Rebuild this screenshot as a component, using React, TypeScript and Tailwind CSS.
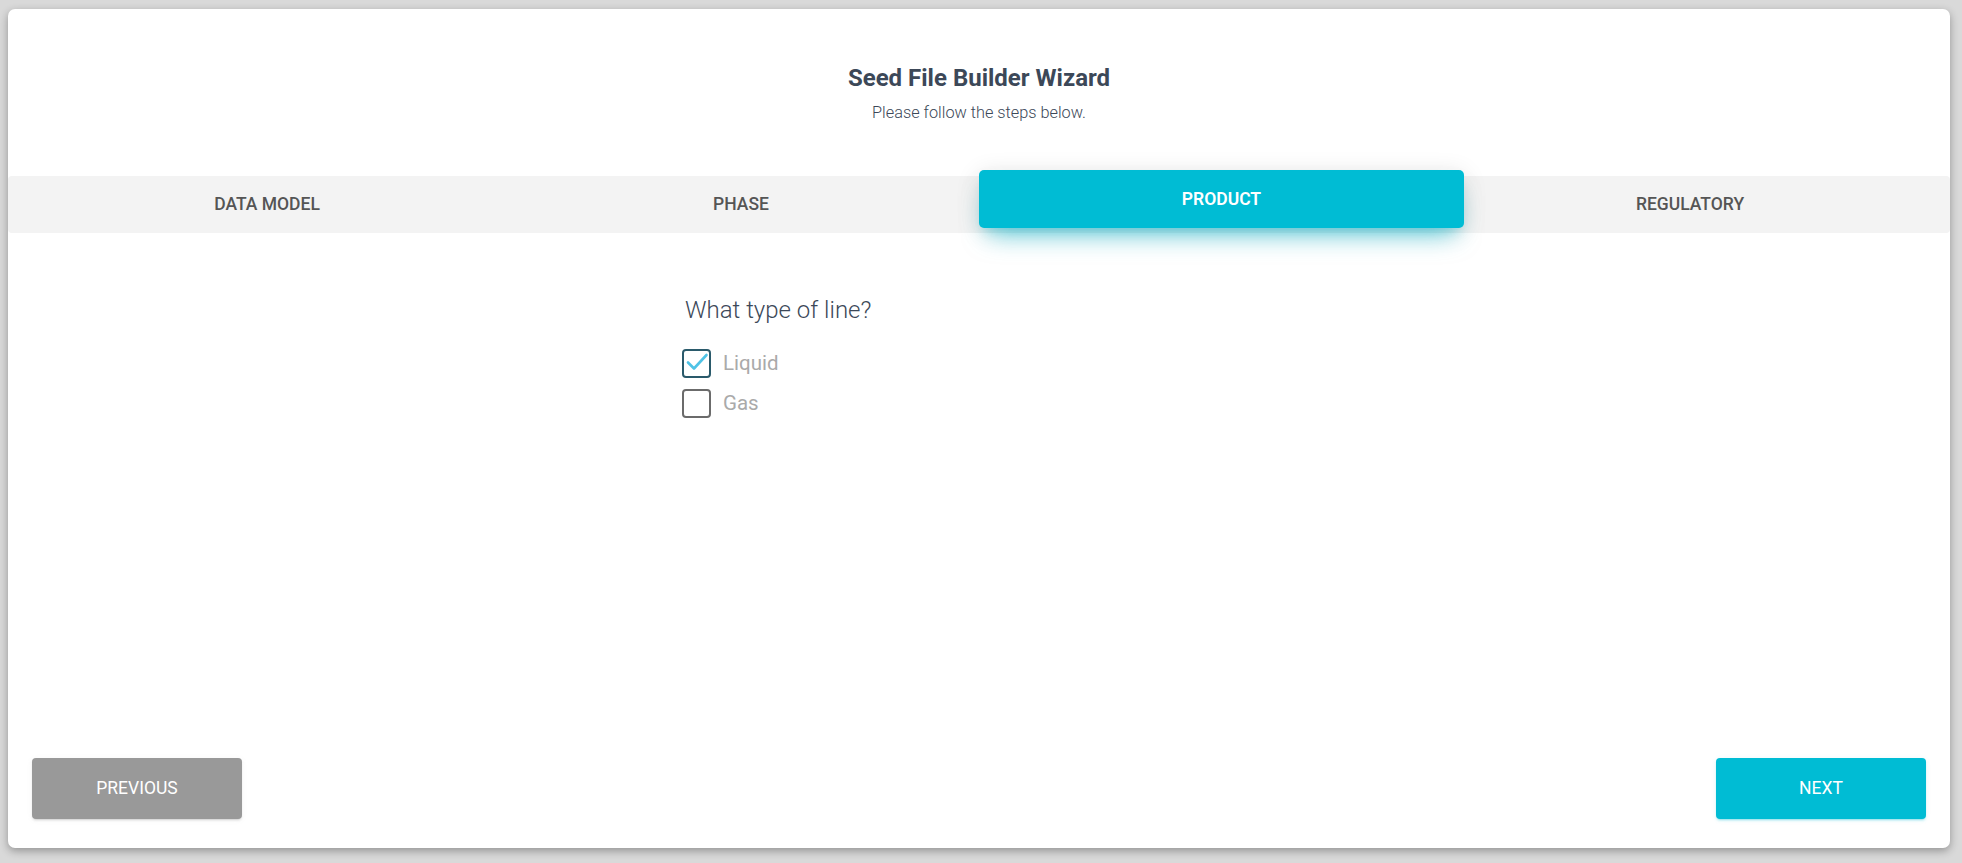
import { useState } from "react";

const STEPS = ["Data Model", "Phase", "Product", "Regulatory"];

export default function App() {
  const [checked, setChecked] = useState<Record<string, boolean>>({ Liquid: true, Gas: false });
  const active = 2;

  return (
    <div className="min-h-screen w-full bg-[#d9d9d9] pt-[9px] pl-[8px]" style={{ fontFamily: "Roboto, 'Liberation Sans', sans-serif" }}>
      {/* Card */}
      <div className="w-[1942px] h-[839px] bg-white rounded-[7px] shadow-[0_3px_9px_rgba(0,0,0,0.32)] flex flex-col">
        {/* Header */}
        <div className="pt-[53px] flex flex-col items-center text-[#3c4858]">
          <h3 className="text-[24px] leading-[32px] font-bold">Seed File Builder Wizard</h3>
          <h5 className="mt-[8px] text-[16.3px] leading-[22px] font-light">Please follow the steps below.</h5>
        </div>

        {/* Steps */}
        <div className="relative mt-[52px]">
          <ul className="grid grid-cols-[518fr_430fr_474fr_520fr] h-[57px] bg-[#f3f3f3] rounded-[4px]">
            {STEPS.map((s, i) => (
              <li
                key={s}
                className={`flex items-center justify-center text-[17.5px] font-medium uppercase text-[#555555] ${i === active ? "invisible" : ""}`}
              >
                {s}
              </li>
            ))}
          </ul>
          {/* Moving tab */}
          <div className="absolute top-[-6px] left-[971px] w-[485px] h-[58px] rounded-[5px] bg-[#00bcd4] flex items-center justify-center text-white text-[17.5px] font-semibold uppercase shadow-[0_16px_26px_-10px_rgba(0,188,212,0.56),0_4px_25px_0_rgba(0,0,0,0.12),0_8px_10px_-5px_rgba(0,188,212,0.2)]">
            {STEPS[active]}
          </div>
        </div>

        {/* Content */}
        <div className="mx-auto w-[594px] pt-[61px]">
          <p className="pl-[3px] text-[24px] leading-[32px] font-light text-[#3c4858]">What type of line?</p>
          <div className="mt-[22px] flex flex-col gap-[9px]">
            {["Liquid", "Gas"].map((opt) => (
              <label key={opt} className="flex items-center gap-[12px] cursor-pointer" onClick={() => setChecked({ ...checked, [opt]: !checked[opt] })}>
                <span
                  className={`w-[29px] h-[29px] rounded-[4px] border-[2.5px] flex items-center justify-center ${
                    checked[opt] ? "border-[#2a5a6b]" : "border-[#6b6b6b]"
                  }`}
                >
                  {checked[opt] && (
                    <svg width="24" height="24" viewBox="0 0 24 24" className="-mt-[3px]">
                      <polyline points="3,12.5 9,18.5 21.5,5" fill="none" stroke="#4fc3e6" strokeWidth="2.6" strokeLinecap="round" strokeLinejoin="round" />
                    </svg>
                  )}
                </span>
                <span className="text-[20.5px] text-[#aaaaaa]">{opt}</span>
              </label>
            ))}
          </div>
        </div>

        {/* Footer */}
        <div className="mt-auto flex justify-between px-[24px] pb-[29px]">
          <button className="w-[210px] h-[61px] rounded-[4px] bg-[#999999] text-white text-[17.5px] font-normal uppercase shadow-[0_2px_2px_0_rgba(153,153,153,0.14),0_3px_1px_-2px_rgba(153,153,153,0.2),0_1px_5px_0_rgba(153,153,153,0.12)]">
            Previous
          </button>
          <button className="w-[210px] h-[61px] rounded-[4px] bg-[#00bcd4] text-white text-[17.5px] font-normal uppercase shadow-[0_2px_2px_0_rgba(0,188,212,0.14),0_3px_1px_-2px_rgba(0,188,212,0.2),0_1px_5px_0_rgba(0,188,212,0.12)]">
            Next
          </button>
        </div>
      </div>
    </div>
  );
}
